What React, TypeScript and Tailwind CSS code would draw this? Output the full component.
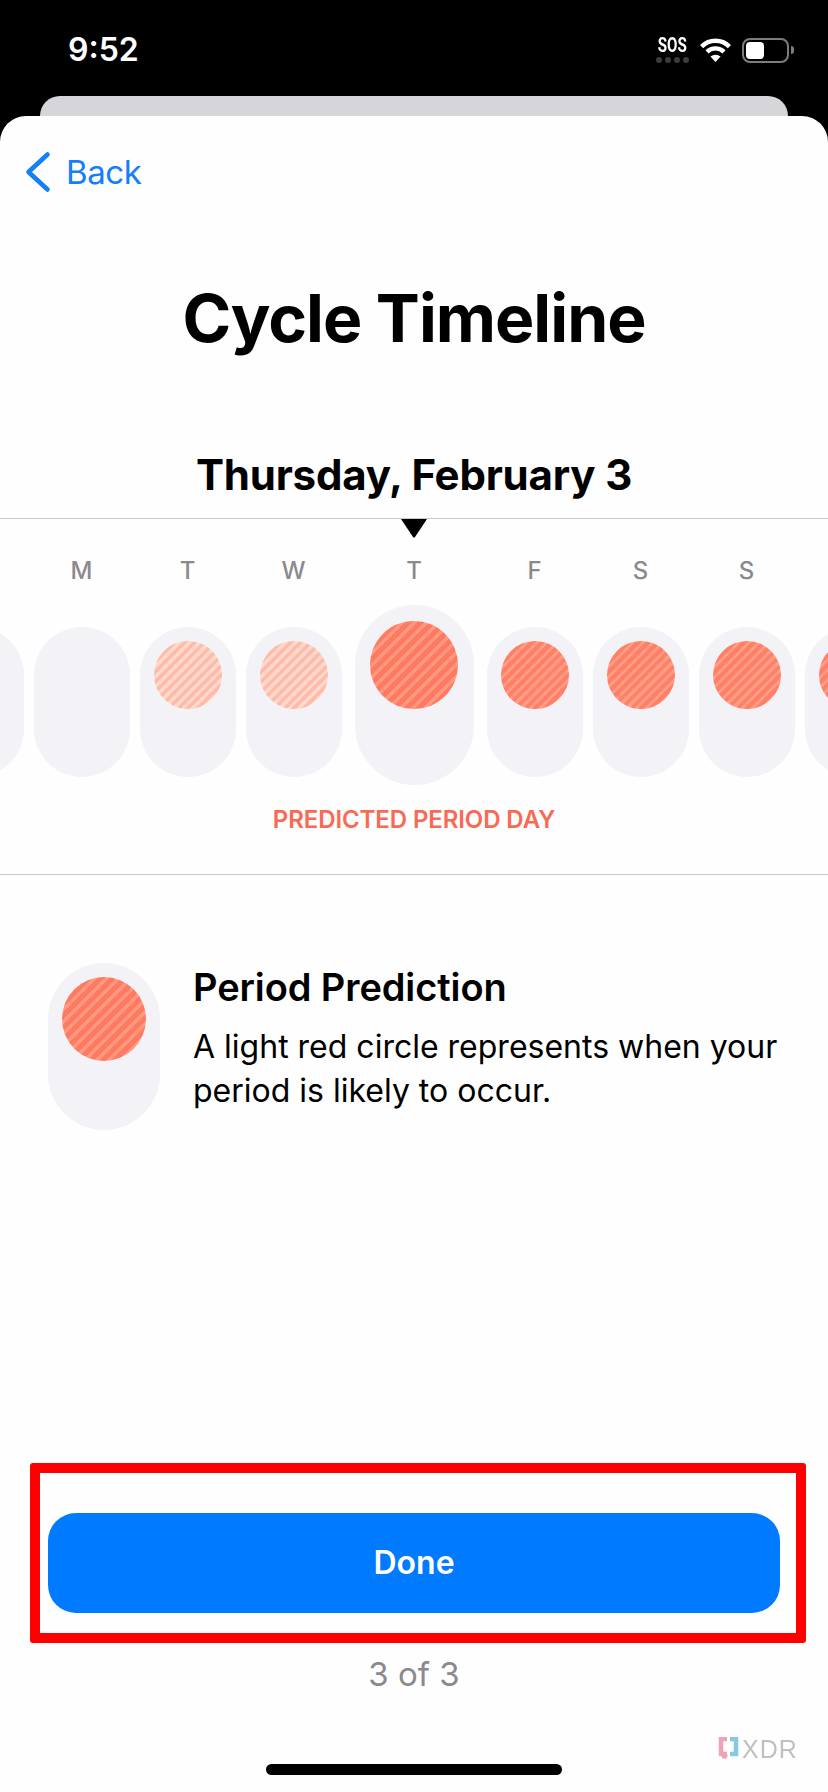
import React from 'react';

type Shade = 'none' | 'light' | 'full';

interface Day {
  letter: string;
  shade: Shade;
  big?: boolean;
}

const days: Day[] = [
  { letter: '', shade: 'none' },
  { letter: 'M', shade: 'none' },
  { letter: 'T', shade: 'light' },
  { letter: 'W', shade: 'light' },
  { letter: 'T', shade: 'full', big: true },
  { letter: 'F', shade: 'full' },
  { letter: 'S', shade: 'full' },
  { letter: 'S', shade: 'full' },
  { letter: '', shade: 'full' },
];

const fullStripes =
  'bg-[repeating-linear-gradient(135deg,#ff7f67_0px,#ff7f67_4px,#ff9c83_4px,#ff9c83_7px)]';
const bigStripes =
  'bg-[repeating-linear-gradient(135deg,#ff7a60_0px,#ff7a60_5px,#ff987f_5px,#ff987f_8.5px)]';
const lightStripes =
  'bg-[repeating-linear-gradient(135deg,#ffbaaa_0px,#ffbaaa_3.5px,#ffd8cc_3.5px,#ffd8cc_7px)]';

function DayColumn({ day }: { day: Day }) {
  return (
    <div className={day.big ? 'mx-[3px] flex w-[119px] shrink-0 flex-col items-center' : 'flex w-[96px] shrink-0 flex-col items-center'}>
      <div className="h-[28px] text-[24px] leading-[28px] font-medium text-[#8a8a8e]">{day.letter}</div>
      <div className="mt-[20px] h-[180px] w-full">
        {day.big ? (
          <div className="flex h-[180px] w-full justify-center rounded-full bg-[#f2f2f7] pt-[16px]">
            <div className={`h-[88px] w-[88px] rounded-full ${bigStripes}`} />
          </div>
        ) : (
          <div className="mt-[22px] flex h-[150px] w-full justify-center rounded-full bg-[#f2f2f7] pt-[14px]">
            {day.shade !== 'none' && (
              <div className={`h-[68px] w-[68px] rounded-full ${day.shade === 'light' ? lightStripes : fullStripes}`} />
            )}
          </div>
        )}
      </div>
    </div>
  );
}

function StatusBar() {
  return (
    <div className="flex h-[96px] items-start justify-between pt-[33px] pr-[34px] pl-[68px] text-white">
      <div className="text-[32px] leading-[34px] font-semibold">9:52</div>
      <div className="flex items-center gap-[11px] pt-[4px]">
        <div className="flex w-[33px] flex-col items-center">
          <div className="h-[17px] scale-x-[0.72] font-['Roboto',sans-serif] text-[21px] leading-[17px] font-bold">SOS</div>
          <div className="mt-[3px] flex gap-[3px]">
            <span className="h-[6px] w-[6px] rounded-full bg-[#3c3c3c]" />
            <span className="h-[6px] w-[6px] rounded-full bg-[#3c3c3c]" />
            <span className="h-[6px] w-[6px] rounded-full bg-[#3c3c3c]" />
            <span className="h-[6px] w-[6px] rounded-full bg-[#3c3c3c]" />
          </div>
        </div>
        <svg width="31" height="24" viewBox="0 0 31 24" fill="none">
          <path d="M1.6 8.6A19.5 19.5 0 0 1 29.4 8.6" stroke="white" strokeWidth="4.4" />
          <path d="M7 13.9A12 12 0 0 1 24 13.9" stroke="white" strokeWidth="4.4" />
          <path d="M15.5 24L10.4 18.6Q15.5 14.8 20.6 18.6Z" fill="white" />
        </svg>
        <div className="flex items-center gap-[2px]">
          <div className="flex h-[25px] w-[47px] items-stretch rounded-[8px] border-2 border-[#7d7d7d] p-[2px]">
            <div className="w-[18px] rounded-[4px] bg-white" />
          </div>
          <div className="h-[8px] w-[3px] rounded-r-full bg-[#7d7d7d]" />
        </div>
      </div>
    </div>
  );
}

function XdaMark() {
  return (
    <div className="absolute top-[1737px] left-[718px] flex items-center gap-[3px] opacity-80 blur-[0.7px]">
      <svg width="21" height="24" viewBox="0 0 21 24" fill="none">
        <path d="M9 2H3V17H6V21L8 17H9" stroke="#e88ea4" strokeWidth="4.5" />
        <path d="M12 2H18V17H12" stroke="#69bde0" strokeWidth="4.5" />
      </svg>
      <span className="font-['Liberation_Sans',sans-serif] text-[25px] leading-[24px] font-normal tracking-[1px] text-[#b0b0b4]">XDR</span>
    </div>
  );
}

export default function App() {
  return (
    <div className="relative flex h-[1792px] w-[828px] flex-col overflow-hidden bg-black font-['Inter','Noto_Sans',sans-serif]">
      <StatusBar />
      <div className="mx-[40px] h-[20px] shrink-0 rounded-t-[20px] bg-[#d5d5da]" />
      <div className="flex flex-1 flex-col overflow-hidden rounded-t-[26px] bg-[#fefefe] text-black">
        {/* Nav */}
        <div className="flex h-[112px] shrink-0 items-center gap-[15px] pl-[25px]">
          <svg width="26" height="42" viewBox="0 0 26 42" fill="none">
            <path d="M22.5 3.5L3.5 21L22.5 38.5" stroke="#147efb" strokeWidth="4.6" strokeLinecap="round" strokeLinejoin="round" />
          </svg>
          <span className="text-[33px] leading-[40px] tracking-[-0.4px] text-[#147efb]">Back</span>
        </div>

        <h1 className="flex h-[180px] shrink-0 items-center justify-center text-[66px] font-bold tracking-[-1px]">Cycle Timeline</h1>

        <div className="mt-[43px] h-[48px] shrink-0 text-center text-[42px] leading-[48px] font-bold tracking-[-0.2px]">Thursday, February 3</div>

        {/* Timeline */}
        <div className="mt-[19px] shrink-0 border-y border-[#c9c9cc] pb-[39px]">
          <svg className="mx-auto block" width="26" height="19" viewBox="0 0 26 19">
            <path d="M0 0H26L14 18Q13 19 12 18Z" fill="black" />
          </svg>
          <div className="mt-[19px] flex justify-center gap-[10px] overflow-hidden">
            {days.map((day, i) => (
              <DayColumn key={i} day={day} />
            ))}
          </div>
          <div className="mt-[20px] h-[30px] text-center text-[24px] leading-[30px] font-semibold tracking-[-0.1px] text-[#f96a55]">
            PREDICTED PERIOD DAY
          </div>
        </div>

        {/* Legend */}
        <div className="mt-[88px] flex shrink-0 gap-[33px] pl-[48px]">
          <div className="flex h-[167px] w-[112px] shrink-0 justify-center rounded-full bg-[#f2f2f7] pt-[14px]">
            <div className={`h-[84px] w-[84px] rounded-full ${bigStripes}`} />
          </div>
          <div>
            <div className="text-[38px] leading-[48px] font-semibold tracking-[-0.1px]">Period Prediction</div>
            <p className="mt-[14px] w-[600px] text-[32px] leading-[44px]">
              A light red circle represents when your
              <br />
              period is likely to occur.
            </p>
          </div>
        </div>

        {/* Footer */}
        <div className="mt-auto mr-[22px] ml-[30px] shrink-0 rounded-[3px] border-[10px] border-[#ff0000] pt-[40px] pr-[16px] pb-[20px] pl-[8px]">
          <div className="flex h-[100px] items-center justify-center rounded-[28px] bg-[#007aff] text-[32px] font-semibold text-white">Done</div>
        </div>
        <div className="mt-[11px] h-[40px] shrink-0 text-center text-[33px] leading-[40px] text-[#8a8a8e]">3 of 3</div>
        <div className="mx-auto mt-[70px] mb-[17px] h-[11px] w-[296px] shrink-0 rounded-full bg-black" />
      </div>
      <XdaMark />
    </div>
  );
}
